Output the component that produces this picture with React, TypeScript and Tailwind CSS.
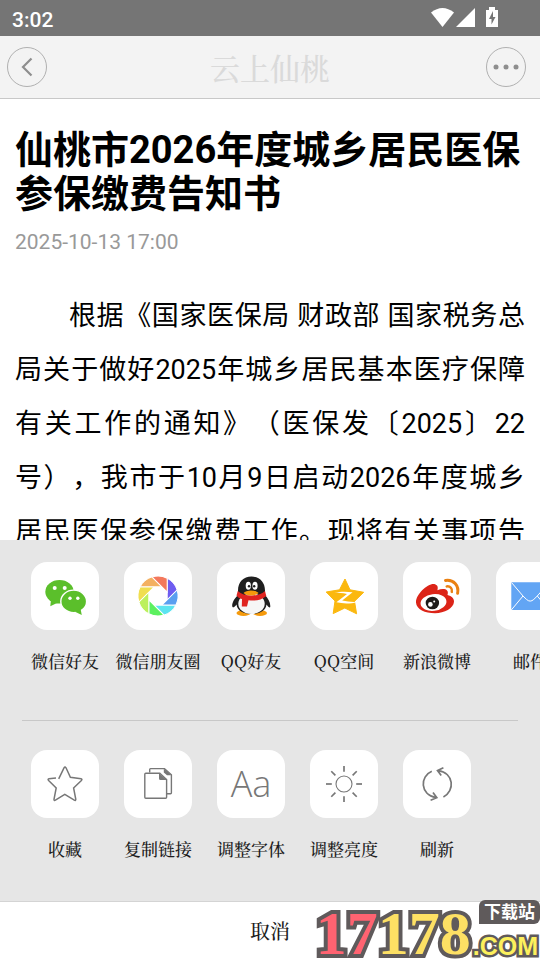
import type { ReactNode } from "react"

const SANS = "font-['Roboto','Noto_Sans_CJK_SC',sans-serif]"
const SERIF = "font-['Noto_Serif_CJK_SC','Liberation_Serif','Noto_Sans_CJK_SC',serif]"

const APERTURE_COLORS = ["#6e5cf0", "#5a9ff0", "#5ce4f0", "#5cf05f", "#bcf05c", "#f0de50", "#f3b061", "#f3785c"]
const SUN_ANGLES = [0, 45, 90, 135, 180, 225, 270, 315]

interface ActionItem {
  label: string
  icon: ReactNode
}

// All action icons are drawn on the full 68x68 tile
function TileSvg({ children }: { children: ReactNode }) {
  return (
    <svg viewBox="0 0 68 68" className="h-full w-full" fill="none" aria-hidden="true">
      {children}
    </svg>
  )
}

function WechatIcon() {
  return (
    <TileSvg>
      <g fill="#5bbf2b">
        <ellipse cx="28.5" cy="29.8" rx="14.2" ry="11.8" />
        <path d="M20 37.5 19.3 44.2 27 40.5Z" />
        <ellipse cx="42.7" cy="39.4" rx="12.9" ry="11.3" stroke="#fff" strokeWidth="1.4" />
        <path d="M44 49.8 50.8 53 49.6 47Z" />
      </g>
      <g fill="#fff">
        <circle cx="23.7" cy="26" r="2" />
        <circle cx="33.7" cy="26" r="2" />
        <circle cx="39" cy="36.3" r="1.7" />
        <circle cx="46.8" cy="36.3" r="1.7" />
      </g>
    </TileSvg>
  )
}

function MomentsIcon() {
  return (
    <TileSvg>
      {APERTURE_COLORS.map((color, i) => (
        <path
          key={color}
          d="M43.2 16.2A20 20 0 0 1 53.1 27.9L43.2 37.8Z"
          fill={color}
          stroke="#fff"
          strokeWidth="1"
          transform={`rotate(${i * 45} 34 34)`}
        />
      ))}
    </TileSvg>
  )
}

function QQIcon() {
  return (
    <TileSvg>
      <ellipse cx="26.5" cy="51" rx="7" ry="3" fill="#f59a0c" />
      <ellipse cx="43" cy="51" rx="7" ry="3" fill="#f59a0c" />
      <path
        d="M34.5 14.5C42.5 14.5 48 20 48 28.5V33C51 36 53.5 40.5 53.3 44.5C53.2 46.5 51.5 45.5 49.5 42.5C48.8 48.5 43 52 34.5 52C26 52 20.2 48.5 19.5 42.5C17.5 45.5 15.4 46.3 15.2 44C15 40.5 17.8 36 21 33V28.5C21 20 26.5 14.5 34.5 14.5Z"
        fill="#1f1f1f"
      />
      <ellipse cx="34.5" cy="41.7" rx="13.2" ry="10.3" fill="#f6f6f6" />
      <path d="M20.8 29C27 35 42 35 48 29L49.3 34C44 38.5 38 39 31.5 38.3L30 44.5H24.8L25 37C22.5 36.5 20.5 35 19.5 33.5Z" fill="#e02420" />
      <ellipse cx="31.3" cy="23.8" rx="2.6" ry="4" fill="#fff" />
      <ellipse cx="38" cy="23.8" rx="2.6" ry="4" fill="#fff" />
      <circle cx="32" cy="24.3" r="1.2" fill="#1f1f1f" />
      <circle cx="37.2" cy="24.3" r="1.2" fill="#1f1f1f" />
      <path d="M26.5 31C29 27.5 39 27.5 41.5 31C38.5 34.3 29.5 34.3 26.5 31Z" fill="#f59a0c" />
    </TileSvg>
  )
}

function QzoneIcon() {
  return (
    <TileSvg>
      <path
        d="M35 17 40 27.8 53.7 30.3 44.5 39.3 46.6 51.8 34.8 46 23.2 51.6 25 39 16.2 30 29.5 27.8Z"
        fill="#fbb80f"
        stroke="#fbb80f"
        strokeLinejoin="round"
      />
      <path d="M24.3 30.8C30 29.3 37 29.4 42.6 30.3L32.2 38.6C37 39.7 42 40.2 46.8 39.9C41 41.9 33 41.8 26.4 40.3L37 32C32.5 31 28.5 30.9 24.3 30.8Z" fill="#fff" />
    </TileSvg>
  )
}

function WeiboIcon() {
  return (
    <TileSvg>
      <path
        d="M13 40.5C12.8 32 25.5 20.5 32 22.2C34.8 23 35.2 25.5 34.4 28.3C40 25.8 46.6 26.8 44.5 33C48.7 34 51.2 36.5 51 39.8C50.5 46.5 41.5 51.2 32 51.2C22 51.2 13.4 47.5 13 40.5Z"
        fill="#dc2418"
      />
      <ellipse cx="30.5" cy="40.5" rx="13" ry="8.4" fill="#fff" transform="rotate(-7 30.5 40.5)" />
      <ellipse cx="29.4" cy="41" rx="6.7" ry="6.3" fill="#1d1a19" />
      <circle cx="27.4" cy="42.4" r="2.3" fill="#fff" />
      <circle cx="31.2" cy="39.6" r="1" fill="#fff" />
      <path d="M42.5 18.4C50.5 17.2 56.2 23.5 54.6 31.3" stroke="#ea8011" strokeWidth="3" strokeLinecap="round" />
      <path d="M43.7 24.4C47.3 24 49.6 26.5 48.8 29.9" stroke="#ea8011" strokeWidth="2.5" strokeLinecap="round" />
    </TileSvg>
  )
}

function MailIcon() {
  return (
    <TileSvg>
      <path d="M15.3 20.3H53V48H15.3Z" fill="#62a5f4" />
      <path
        d="M15.5 20.5 27 34 30.5 37.4Q34.2 40.8 37.8 37.4L41.3 34 53 20.5M15.3 48 27 34M53 48 41.3 34"
        stroke="#fff"
        strokeWidth="1"
      />
    </TileSvg>
  )
}

function FavoriteIcon() {
  return (
    <TileSvg>
      <path
        d="M27.7 28.8 33 17.8Q34 16.2 35 17.8L39.4 27.3 50 28.7Q51.6 29.2 50.4 30.5L42.6 38 44.8 49.3Q44.8 51 43.3 50.2L33.8 44.3 24.4 50.2Q22.9 51 23 49.3L25.2 38 17.6 30.5Q16.4 29.2 18 28.7L25 28.1"
        stroke="#777"
        strokeWidth="1.5"
      />
    </TileSvg>
  )
}

function CopyIcon() {
  return (
    <TileSvg>
      <g stroke="#777" strokeWidth="1.4">
        <path d="M25.7 22.5V19.4Q25.7 18.6 26.5 18.6H40.5L47.4 24.8V42.8Q47.4 43.7 46.5 43.7H43" />
        <path d="M35.8 23.2H21.8Q20.8 23.2 20.8 24.2V47.2Q20.8 48.2 21.8 48.2H41.6Q42.6 48.2 42.6 47.2V29.5Z" />
      </g>
      <path d="M35 23.2 42.8 30H36.5Q35 30 35 28.5ZM39.8 18.5 47.6 25.3H43L39.8 22.5Z" fill="#777" />
    </TileSvg>
  )
}

function BrightnessIcon() {
  return (
    <TileSvg>
      <circle cx="34" cy="34" r="8" stroke="#777" strokeWidth="1.1" />
      {SUN_ANGLES.map((angle) => (
        <path key={angle} d="M34 16V21.8" stroke="#777" strokeWidth="1.7" transform={`rotate(${angle} 34 34)`} />
      ))}
    </TileSvg>
  )
}

function RefreshIcon() {
  return (
    <TileSvg>
      <g stroke="#777" strokeWidth="1.7">
        <path d="M28.8 21.3C16.8 26.3 16.8 44.5 33 47.6M30 42.4 33.8 47.7 27.6 50.2" />
        <path d="M40.4 47C52 41 51.3 23 35 20.7M40.4 17.8 34.5 20.6 38.2 25.6" />
      </g>
    </TileSvg>
  )
}

const shareItems: ActionItem[] = [
  { label: "微信好友", icon: <WechatIcon /> },
  { label: "微信朋友圈", icon: <MomentsIcon /> },
  { label: "QQ好友", icon: <QQIcon /> },
  { label: "QQ空间", icon: <QzoneIcon /> },
  { label: "新浪微博", icon: <WeiboIcon /> },
  { label: "邮件", icon: <MailIcon /> },
]

const toolItems: ActionItem[] = [
  { label: "收藏", icon: <FavoriteIcon /> },
  { label: "复制链接", icon: <CopyIcon /> },
  {
    label: "调整字体",
    icon: <span className="font-['Open_Sans',sans-serif] text-[36px] font-light leading-none text-[#777]">Aa</span>,
  },
  { label: "调整亮度", icon: <BrightnessIcon /> },
  { label: "刷新", icon: <RefreshIcon /> },
]

function ActionRow({ items }: { items: ActionItem[] }) {
  return (
    <div className="flex gap-[25px] overflow-x-auto px-[31px] [scrollbar-width:none]">
      {items.map((item) => (
        <button key={item.label} type="button" className="flex w-[68px] shrink-0 flex-col items-center gap-[19px]">
          <span className="flex h-[68px] w-[68px] items-center justify-center rounded-2xl bg-white">{item.icon}</span>
          <span className="whitespace-nowrap text-[17px] font-medium leading-6 text-[#1c1c1c]">{item.label}</span>
        </button>
      ))}
    </div>
  )
}

function StatusBar() {
  return (
    <div className="flex h-9 shrink-0 items-center justify-between bg-[#757575] pl-3 pr-[41px] text-white">
      <span className="pt-1 text-[21px] font-medium leading-8">3:02</span>
      <svg width="68" height="22" viewBox="0 0 68 22" fill="#fff" aria-hidden="true">
        <path d="M0 5.5Q11.5-3.5 23 5.5L11.5 20Z" />
        <path d="M44 1V20H25Z" />
        <path d="M55 3H58V0H64V3H67V20H55Z" />
        <path d="M62 4 58 12H60.5V17.5L64.5 10H62Z" fill="#757575" />
      </svg>
    </div>
  )
}

function Header() {
  return (
    <header className="flex h-[63px] shrink-0 items-center justify-between border-b border-[#c8c8c8] bg-[#f3f3f3] pl-[7px] pr-[14px]">
      <button type="button" aria-label="返回" className="flex h-10 w-10 items-center justify-center rounded-full border border-[#b0b0b0]">
        <svg width="12" height="20" viewBox="0 0 12 20" fill="none" stroke="#8e8e8e" strokeWidth="2.2" aria-hidden="true">
          <path d="M10.5 1.5 2 10 10.5 18.5" />
        </svg>
      </button>
      <h2 className={`${SERIF} pl-[7px] text-[30px] font-medium leading-10 text-[#dadada]`}>云上仙桃</h2>
      <button type="button" aria-label="更多" className="flex h-10 w-10 items-center justify-center rounded-full border border-[#b0b0b0]">
        <svg width="26" height="6" viewBox="0 0 26 6" fill="#8e8e8e" aria-hidden="true">
          <circle cx="3" cy="3" r="2.5" />
          <circle cx="13" cy="3" r="2.5" />
          <circle cx="23" cy="3" r="2.5" />
        </svg>
      </button>
    </header>
  )
}

function SiteMark() {
  return (
    <div className="pointer-events-none absolute bottom-0 right-0 flex h-[60px] items-end font-bold">
      <div className="font-['Liberation_Serif',serif] text-[62px] leading-[54px] text-[#fde064] [-webkit-text-stroke:8px_#5f5a5b] [paint-order:stroke_fill]">
        <span className="text-[#ff6371]">17</span>178
      </div>
      <div className="flex h-full flex-col items-end justify-between">
        <span className="rounded-md rounded-bl-none bg-[#5f5a5b] px-[5px] text-[17px] leading-6 text-white">下载站</span>
        <span className="px-[2px] font-['Liberation_Sans',sans-serif] text-[25px] leading-7 text-[#fdf05c] [-webkit-text-stroke:5px_#5f5a5b] [paint-order:stroke_fill]">
          .COM
        </span>
      </div>
    </div>
  )
}

export default function App() {
  return (
    <div lang="zh-CN" className={`${SANS} relative flex h-screen flex-col overflow-hidden bg-white text-black`}>
      <StatusBar />
      <Header />

      <article className="min-h-0 flex-1 overflow-hidden px-[15px] pt-[29px]">
        <h1 className="text-[38px] font-bold leading-[44px]">仙桃市2026年度城乡居民医保参保缴费告知书</h1>
        <time className="mt-3 block text-[21px] leading-7 text-[#999]">2025-10-13 17:00</time>
        <p className="mt-[33px] indent-[54px] text-[27px] leading-[54px] text-justify [text-align-last:justify] [text-spacing-trim:space-all]">
          根据《国家医保局 财政部 国家税务总局关于做好2025年城乡居民基本医疗保障有关工作的通知》（医保发〔2025〕22号），我市于10月9日启动2026年度城乡居民医保参保缴费工作。现将有关事项告
        </p>
      </article>

      <section className={`${SERIF} shrink-0 bg-[#e6e6e6] pb-10 pt-[22px]`}>
        <ActionRow items={shareItems} />
        <hr className="mx-[22px] mb-[29px] mt-[47px] border-[#c8c8c8]" />
        <ActionRow items={toolItems} />
      </section>
      <button type="button" className={`${SERIF} h-[59px] shrink-0 border-t border-[#d4d4d4] bg-white text-xl font-medium text-[#1c1c1c]`}>
        取消
      </button>

      <SiteMark />
    </div>
  )
}
